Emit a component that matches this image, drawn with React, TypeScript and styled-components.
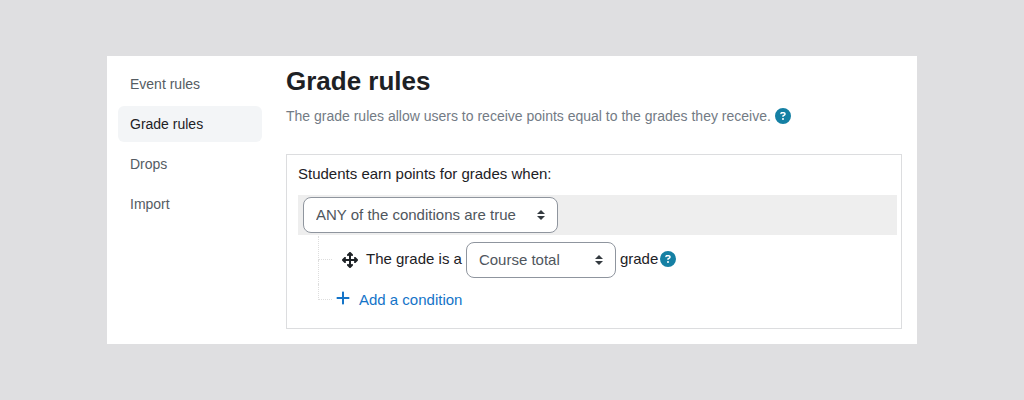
import React from "react";
import styled, { createGlobalStyle } from "styled-components";
import { FaArrowsUpDownLeftRight, FaCircleQuestion, FaPlus } from "react-icons/fa6";

const GlobalStyle = createGlobalStyle`
  *, *::before, *::after { box-sizing: border-box; }
  body {
    margin: 0;
    background: #dfdfe1;
    color: #1d2125;
    font: 15px/24px "Liberation Sans", Arial, sans-serif;
  }
`;

const Page = styled.div`
  padding: 56px 107px;
`;

const Panel = styled.div`
  display: flex;
  gap: 24px;
  padding: 10px 15px 15px 11px;
  background: #fff;
`;

const Nav = styled.nav`
  display: flex;
  flex-direction: column;
  flex: 0 0 144px;
  gap: 4px;
`;

const NavLink = styled.a<{ $active?: boolean }>`
  padding: 6px 12px;
  border-radius: 6px;
  background: ${(p) => (p.$active ? "#f3f5f7" : "transparent")};
  color: ${(p) => (p.$active ? "#1d2125" : "#555c63")};
  font-size: 14px;
  text-decoration: none;
`;

const Content = styled.main`
  flex: 1;
  min-width: 0;
`;

const Title = styled.h1`
  margin: 0;
  font-size: 26px;
  line-height: 30px;
`;

const Intro = styled.p`
  display: flex;
  align-items: center;
  gap: 4px;
  margin: 8px 0 26px;
  color: #737b85;
  font-size: 14px;
`;

const HelpButton = styled.button`
  display: inline-flex;
  padding: 0;
  border: 0;
  background: none;
  color: #1580a4;
  font-size: 16px;
  cursor: pointer;
`;

const RuleBox = styled.section`
  padding: 7px 4px 12px 11px;
  border: 1px solid #dcdddf;
`;

const RuleLabel = styled.label`
  display: block;
  margin-bottom: 9px;
`;

const OperatorBar = styled.div`
  display: flex;
  padding: 2px 5px;
  margin-bottom: 1px;
  background: #eee;
`;

const SelectWrap = styled.span<{ $width: number }>`
  position: relative;
  display: inline-flex;
  width: ${(p) => p.$width}px;
`;

const SelectField = styled.select`
  appearance: none;
  width: 100%;
  height: 36px;
  padding: 0 28px 0 12px;
  border: 1px solid #8f959e;
  border-radius: 8px;
  background: #fff;
  color: #4f565d;
  font: inherit;
`;

const SelectArrows = styled.svg`
  position: absolute;
  top: 13px;
  right: 13px;
  pointer-events: none;
`;

const Tree = styled.ul`
  margin: 0 0 0 20px;
  padding: 0;
  list-style: none;
`;

const TreeItem = styled.li<{ $height: number }>`
  display: flex;
  height: ${(p) => p.$height}px;
`;

const Branch = styled.span<{ $last?: boolean }>`
  display: grid;
  grid-template-rows: 1fr 1fr;
  width: 14px;

  &::before {
    content: "";
    border-left: 1px dotted #ddd;
    border-bottom: 1px dotted #ddd;
  }

  &::after {
    content: "";
    border-left: ${(p) => (p.$last ? "0" : "1px dotted #ddd")};
  }
`;

const Condition = styled.div`
  display: flex;
  align-items: center;
  gap: 4px;
  padding-left: 10px;
`;

const ConditionLabel = styled.label`
  padding-bottom: 2px;
`;

const MoveHandle = styled.button`
  display: inline-flex;
  margin-right: 4px;
  padding: 0;
  border: 0;
  background: none;
  color: #1d2125;
  font-size: 16px;
  cursor: move;
`;

const Unit = styled.span`
  display: inline-flex;
  align-items: center;
  gap: 2px;
  padding-bottom: 2px;
`;

const AddButton = styled.button`
  display: inline-flex;
  align-items: center;
  gap: 8px;
  padding: 0 0 0 3px;
  border: 0;
  background: none;
  color: #1474c8;
  font: inherit;
  cursor: pointer;

  svg {
    width: 16px;
    height: 16px;
    margin-bottom: 4px;
  }
`;

function Select({ id, width, option }: { id: string; width: number; option: string }) {
  return (
    <SelectWrap $width={width}>
      <SelectField id={id}>
        <option>{option}</option>
      </SelectField>
      <SelectArrows width="8" height="10" viewBox="0 0 4 5" aria-hidden="true">
        <path fill="#343a40" d="M2 0L0 2h4zm0 5L0 3h4z" />
      </SelectArrows>
    </SelectWrap>
  );
}

function Help({ label }: { label: string }) {
  return (
    <HelpButton type="button" aria-label={label}>
      <FaCircleQuestion />
    </HelpButton>
  );
}

const links = ["Event rules", "Grade rules", "Drops", "Import"];

export default function App() {
  return (
    <>
      <GlobalStyle />
      <Page>
        <Panel>
          <Nav>
            {links.map((name) => (
              <NavLink key={name} href="#" $active={name === "Grade rules"}>
                {name}
              </NavLink>
            ))}
          </Nav>
          <Content>
            <Title>Grade rules</Title>
            <Intro>
              The grade rules allow users to receive points equal to the grades they receive.
              <Help label="Help with grade rules" />
            </Intro>
            <RuleBox>
              <RuleLabel htmlFor="operator">Students earn points for grades when:</RuleLabel>
              <OperatorBar>
                <Select id="operator" width={255} option="ANY of the conditions are true" />
              </OperatorBar>
              <Tree>
                <TreeItem $height={48}>
                  <Branch />
                  <Condition>
                    <MoveHandle type="button" aria-label="Move condition">
                      <FaArrowsUpDownLeftRight />
                    </MoveHandle>
                    <ConditionLabel htmlFor="grade-type">The grade is a</ConditionLabel>
                    <Select id="grade-type" width={150} option="Course total" />
                    <Unit>
                      grade
                      <Help label="Help with grade type" />
                    </Unit>
                  </Condition>
                </TreeItem>
                <TreeItem $height={32}>
                  <Branch $last />
                  <AddButton type="button">
                    <FaPlus />
                    Add a condition
                  </AddButton>
                </TreeItem>
              </Tree>
            </RuleBox>
          </Content>
        </Panel>
      </Page>
    </>
  );
}
